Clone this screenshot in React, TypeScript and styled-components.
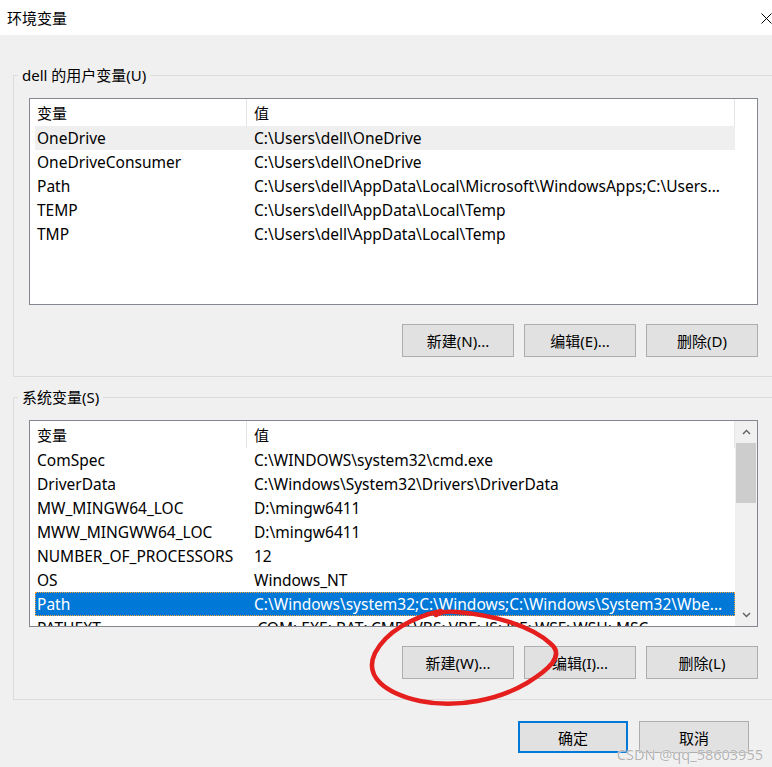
import React from "react";
import styled, { createGlobalStyle } from "styled-components";

const FONT = `"Noto Sans", "Noto Sans CJK SC", sans-serif`;

const GlobalStyle = createGlobalStyle`
  html, body { margin: 0; padding: 0; background: #f0f0f0; }
  body { font-family: ${FONT}; font-size: 15px; color: #000; }
  #root { width: 772px; height: 767px; overflow: hidden; }
`;

const Dialog = styled.div`
  position: relative;
  width: 772px;
  height: 767px;
  overflow: hidden;
  background: #f0f0f0;
  display: flex;
  flex-direction: column;
`;

const TitleBar = styled.div`
  height: 35px;
  flex-shrink: 0;
  background: #fff;
  display: flex;
  align-items: center;
  justify-content: space-between;
  padding-left: 7px;
  box-sizing: border-box;
`;

const Title = styled.span`
  font-size: 15px;
  line-height: 20px;
`;

const CloseGlyph = styled.svg`
  width: 11px;
  height: 11px;
  margin-right: 0px;
  margin-top: 1px;
`;

const Body = styled.div`
  display: flex;
  flex-direction: column;
  padding-left: 13px;
`;

const Group = styled.fieldset<{ $mt: number; $pb: number }>`
  margin: ${(p) => p.$mt}px 0 0 0;
  width: 763px;
  min-width: 0;
  box-sizing: border-box;
  border: 1px solid #dcdcdc;
  padding: 13px 0 ${(p) => p.$pb}px 15px;
`;

const Legend = styled.legend`
  margin-left: -11px;
  padding: 0 4px;
  font-size: 15px;
  line-height: 20px;
  color: #000;
`;

const ListBox = styled.div`
  width: 729px;
  height: 207px;
  box-sizing: border-box;
  border: 1px solid #828790;
  background: #fff;
  display: flex;
  overflow: hidden;
`;

const ListMain = styled.div`
  width: 705px;
  flex-shrink: 0;
  display: flex;
  flex-direction: column;
  overflow: hidden;
`;

const HeaderRow = styled.div`
  display: grid;
  grid-template-columns: 217px 488px;
  height: 27px;
  flex-shrink: 0;
`;

const HeaderCell = styled.div`
  padding-left: 7px;
  line-height: 28px;
  height: 27px;
  box-sizing: border-box;
  border-right: 1px solid #e5e5e5;
  white-space: nowrap;
`;

const Rows = styled.div`
  flex: 1;
  overflow: hidden;
  padding-left: 5px;
  box-sizing: border-box;
`;

const Row = styled.div<{ $state?: "hot" | "selected" }>`
  display: grid;
  grid-template-columns: 212px 488px;
  height: 24px;
  line-height: 24px;
  font-size: 15.5px;
  white-space: nowrap;
  background: ${(p) =>
    p.$state === "selected" ? "#0078d7" : p.$state === "hot" ? "#efefef" : "transparent"};
  color: ${(p) => (p.$state === "selected" ? "#fff" : "#000")};
  outline: ${(p) => (p.$state === "selected" ? "1px dotted #f5a33a" : "none")};
  outline-offset: -1px;
`;

const Cell = styled.div<{ $first?: boolean }>`
  padding-left: ${(p) => (p.$first ? 2 : 7)}px;
  padding-right: ${(p) => (p.$first ? 0 : 8)}px;
  overflow: hidden;
  text-overflow: ellipsis;
  white-space: nowrap;
`;

const ScrollBar = styled.div`
  width: 22px;
  flex-shrink: 0;
  background: #f0f0f0;
  display: flex;
  flex-direction: column;
`;

const ScrollArrow = styled.div`
  height: 22px;
  flex-shrink: 0;
  display: flex;
  align-items: center;
  justify-content: center;
`;

const Thumb = styled.div`
  height: 60px;
  margin: 0 1px;
  background: #cdcdcd;
`;

const Track = styled.div`
  flex: 1;
`;

const ButtonRow = styled.div`
  width: 729px;
  display: flex;
  justify-content: flex-end;
  gap: 10px;
  margin-top: 19px;
`;

const Button = styled.button<{ $primary?: boolean }>`
  width: 112px;
  height: 33px;
  padding: 0;
  box-sizing: border-box;
  background: #e1e1e1;
  border: ${(p) => (p.$primary ? "2px solid #0078d7" : "1px solid #adadad")};
  font-family: ${FONT};
  font-size: 15px;
  color: #000;
  cursor: default;
`;

const FooterButton = styled(Button)`
  width: 110px;
  height: 32px;
`;

const Footer = styled.div`
  display: flex;
  justify-content: flex-end;
  gap: 11px;
  padding-right: 23px;
  margin-top: 21px;
`;

const Annotation = styled.svg`
  position: absolute;
  left: 0;
  top: 0;
  width: 772px;
  height: 767px;
  pointer-events: none;
`;

const Watermark = styled.div`
  position: absolute;
  right: 9px;
  bottom: 4px;
  font-family: ${FONT};
  font-size: 14.5px;
  line-height: 18px;
  color: rgba(160, 160, 160, 0.8);
  text-shadow: 0 0 1px #fff, 0 0 1px #fff;
  pointer-events: none;
`;

type Item = { name: string; value: string; state?: "hot" | "selected" };

const userVars: Item[] = [
  { name: "OneDrive", value: "C:\\Users\\dell\\OneDrive", state: "hot" },
  { name: "OneDriveConsumer", value: "C:\\Users\\dell\\OneDrive" },
  {
    name: "Path",
    value: "C:\\Users\\dell\\AppData\\Local\\Microsoft\\WindowsApps;C:\\Users...",
  },
  { name: "TEMP", value: "C:\\Users\\dell\\AppData\\Local\\Temp" },
  { name: "TMP", value: "C:\\Users\\dell\\AppData\\Local\\Temp" },
];

const sysVars: Item[] = [
  { name: "ComSpec", value: "C:\\WINDOWS\\system32\\cmd.exe" },
  { name: "DriverData", value: "C:\\Windows\\System32\\Drivers\\DriverData" },
  { name: "MW_MINGW64_LOC", value: "D:\\mingw6411" },
  { name: "MWW_MINGWW64_LOC", value: "D:\\mingw6411" },
  { name: "NUMBER_OF_PROCESSORS", value: "12" },
  { name: "OS", value: "Windows_NT" },
  {
    name: "Path",
    value: "C:\\Windows\\system32;C:\\Windows;C:\\Windows\\System32\\Wbe...",
    state: "selected",
  },
  { name: "PATHEXT", value: ".COM;.EXE;.BAT;.CMD;.VBS;.VBE;.JS;.JSE;.WSF;.WSH;.MSC" },
];

const Chevron = ({ up }: { up?: boolean }) => (
  <svg width="9" height="6" viewBox="0 0 9 6">
    <polyline
      points={up ? "1,5 4.5,1.5 8,5" : "1,1 4.5,4.5 8,1"}
      fill="none"
      stroke="#606060"
      strokeWidth="1.4"
    />
  </svg>
);

const VarList = ({ items, scroll }: { items: Item[]; scroll?: boolean }) => (
  <ListBox>
    <ListMain>
      <HeaderRow>
        <HeaderCell>变量</HeaderCell>
        <HeaderCell>值</HeaderCell>
      </HeaderRow>
      <Rows>
        {items.map((it, i) => (
          <Row key={i} $state={it.state}>
            <Cell $first>{it.name}</Cell>
            <Cell>{it.value}</Cell>
          </Row>
        ))}
      </Rows>
    </ListMain>
    {scroll && (
      <ScrollBar>
        <ScrollArrow>
          <Chevron up />
        </ScrollArrow>
        <Thumb />
        <Track />
        <ScrollArrow>
          <Chevron />
        </ScrollArrow>
      </ScrollBar>
    )}
  </ListBox>
);

export default function App() {
  return (
    <>
      <GlobalStyle />
      <Dialog>
        <TitleBar>
          <Title>环境变量</Title>
          <CloseGlyph viewBox="0 0 11 11">
            <path d="M0.5 0.5 L10.5 10.5 M10.5 0.5 L0.5 10.5" stroke="#000" strokeWidth="1" />
          </CloseGlyph>
        </TitleBar>
        <Body>
          <Group $mt={30} $pb={19}>
            <Legend>dell 的用户变量(U)</Legend>
            <VarList items={userVars} />
            <ButtonRow>
              <Button>新建(N)...</Button>
              <Button>编辑(E)...</Button>
              <Button>删除(D)</Button>
            </ButtonRow>
          </Group>
          <Group $mt={10} $pb={20}>
            <Legend>系统变量(S)</Legend>
            <VarList items={sysVars} scroll />
            <ButtonRow>
              <Button>新建(W)...</Button>
              <Button>编辑(I)...</Button>
              <Button>删除(L)</Button>
            </ButtonRow>
          </Group>
        </Body>
        <Footer>
          <FooterButton $primary>确定</FooterButton>
          <FooterButton>取消</FooterButton>
        </Footer>
        <Annotation viewBox="0 0 772 767">
          <path
            d="M441 611 C412 617, 386 632, 375 653 C364 676, 384 693, 420 701 C458 709, 500 699, 527 683 C548 670, 565 656, 551 644 C532 626, 494 615, 457 612 C448 611, 441 612, 436 615"
            fill="none"
            stroke="#e41f1d"
            strokeWidth="4.5"
            strokeLinecap="round"
          />
        </Annotation>
        <Watermark>CSDN @qq_58603955</Watermark>
      </Dialog>
    </>
  );
}
